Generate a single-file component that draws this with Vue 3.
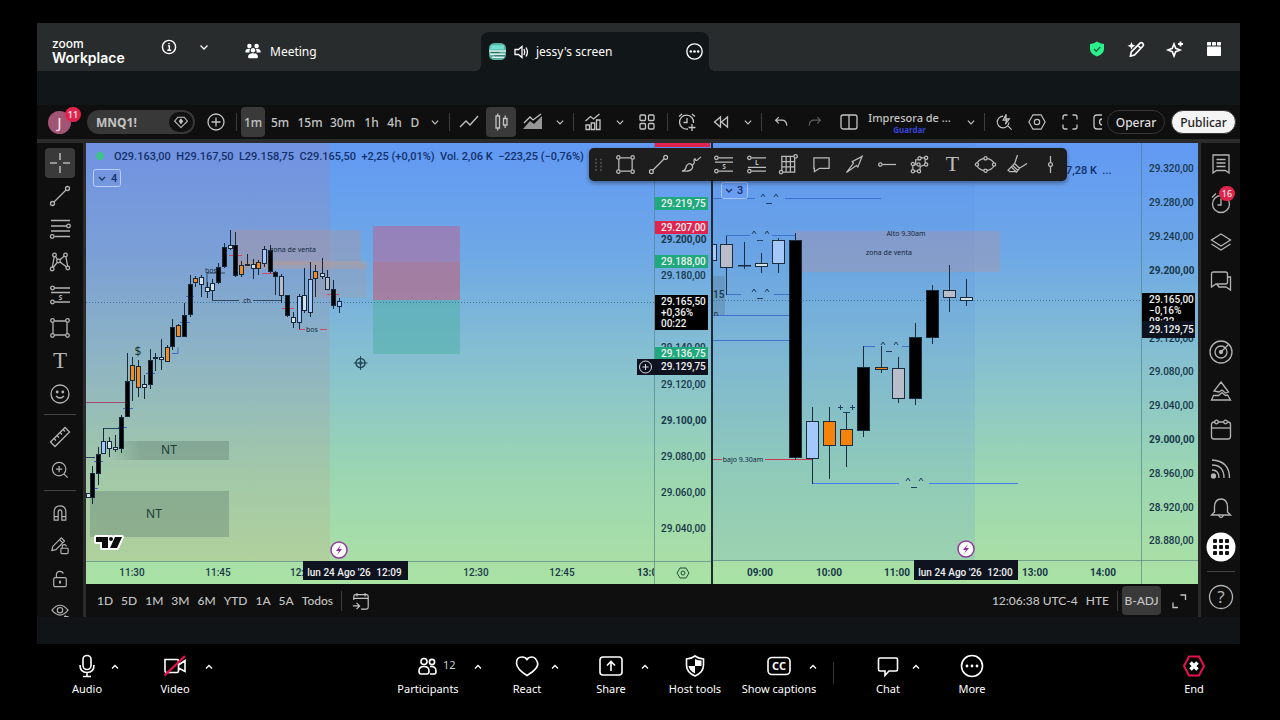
<script setup>
import { h } from 'vue'

const icons = {
  info: '<circle cx="10" cy="10" r="6"/><path d="M9 9h1.300v4M8.500 13h3.500M10 6.400v1"/>',
  chev: '<path d="M6.500 8.500 10 12l3.500-3.500"/>',
  chevUp: '<path d="M7 11.500 10 8.500l3 3"/>',
  people: '<g fill="currentColor" stroke="none"><circle cx="6" cy="4.500" r="2.500"/><circle cx="14" cy="4.500" r="2.500"/><path d="M1.500 11q0-3.500 4-3.500 1 0 1.500.5-1.500 1.500-.8 3.800H2.500q-1 0-1-.8zM18.500 11q0-3.500-4-3.500-1 0-1.500.5 1.500 1.500.8 3.800h3.700q1 0 1-.8z"/><circle cx="10" cy="9.200" r="2.500"/><path d="M4.500 16.500q0-4 5.500-4t5.500 4q0 1.500-1 1.500H5.500q-1 0-1-1.500z"/></g>',
  speaker: '<path d="M4 7.500h3.500L11 4.500v11l-3.500-3H4zM13 7q1.500 3 0 6M15 5.500q2.800 4.500 0 9" />',
  dots: '<circle cx="10" cy="10" r="7.300"/><g fill="currentColor" stroke="none"><circle cx="6.500" cy="10" r="1.200"/><circle cx="10" cy="10" r="1.200"/><circle cx="13.500" cy="10" r="1.200"/></g>',
  shield: '<path fill="#2bf08c" stroke="none" d="M10 2.500q3 2.300 7 2.500v5q0 5-7 7.500Q3 15 3 10V5q4-.2 7-2.500z"/><path stroke="#12643c" d="m7 10 2.200 2.200 4-4.200"/>',
  wand: '<path stroke-width="1.700" d="m4.500 17 .8-4.200 8.500-8.500q1.500-1.300 3 0 1.300 1.500 0 3L8.500 16zM12 6.500l2.500 2.500"/><path fill="currentColor" stroke="none" d="m5.500 3 1.200 2.700 2.800 1-2.800 1.200-1.200 2.800-1.200-2.800-2.800-1.200 2.800-1z"/>',
  spark: '<path stroke-width="1.600" d="m9 5 1.700 4.300L15 11l-4.300 1.700L9 17l-1.700-4.300L3 11l4.300-1.700z"/><path stroke-width="1.800" d="M15.500 2.500v5M13 5h5"/>',
  apps: '<g fill="currentColor" stroke="none"><rect x="3" y="3" width="4" height="3.500" rx=".5"/><rect x="8" y="3" width="4" height="3.500" rx=".5"/><rect x="13" y="3" width="4" height="3.500" rx=".5"/><rect x="3" y="7.500" width="14" height="9.500" rx=".8"/></g>',
  gem: '<path d="M6 4h8l4 5L10 17 2 9z"/><path fill="currentColor" d="m10 6.500 2 2.500-2 3-2-3z"/>',
  plus: '<circle cx="10" cy="10" r="8"/><path d="M10 5.500v9M5.500 10h9"/>',
  line: '<path d="m1 15 6-6 4 4 8-9"/>',
  candles: '<path d="M5 4h3.500v12H5zM6.700 1.500V4M6.700 16v2.500M12.500 6.500H16v6.500h-3.500zM14.200 3.500v3M14.200 13v3"/>',
  area: '<path d="m1 11 6-6 3 3 8-6"/><path fill="currentColor" stroke="none" opacity=".75" d="m0 17 7-8 4 3 8-8v13z"/>',
  indic: '<path d="M3 17.500V13h3.500v4.500zM8.200 17.500V11h3.500v6.500zM13.500 17.500V8H17v9.500zM2.500 9l5-4.500 3 2.500 6-5"/>',
  grid4: '<rect x="3" y="3" width="5.500" height="5.500" rx="1"/><rect x="11.500" y="3" width="5.500" height="5.500" rx="1"/><rect x="3" y="11.500" width="5.500" height="5.500" rx="1"/><rect x="11.500" y="11.500" width="5.500" height="5.500" rx="1"/>',
  alarm: '<path d="M11 17A7 7 0 1 1 16.500 11M10 6v4.500H6.500M2 4.500 5 2M18 4.500 15 2M15 12v7M11.500 15.500h7"/>',
  rewind: '<path d="M9.500 5v10L3.500 10zM16.500 5v10l-6-5z"/>',
  undo: '<path d="M7.500 4.500 4 8l3.500 3.500M4 8h7q5 0 5.500 6"/>',
  redo: '<path d="M12.500 4.500 16 8l-3.500 3.500M16 8H9q-5 0-5.500 6"/>',
  layout: '<rect x="2" y="3" width="16" height="14" rx="2"/><path d="M10 3v14"/>',
  search: '<path d="M9 3.500a6.500 6.500 0 1 0 6.500 7M14 14l4.500 4.500M12.500 1.500 9 8h4l-1.500 4.500L16 6.500h-4z"/>',
  hex: '<path d="M5.500 2h9L19 10l-4.500 8h-9L1 10z"/><circle cx="10" cy="10" r="3"/>',
  full: '<path d="M3 7.500V5q0-2 2-2h2.500M12.500 3H15q2 0 2 2v2.500M17 12.500V15q0 2-2 2h-2.500M7.500 17H5q-2 0-2-2v-2.500"/>',
  wallet: '<path d="M15 3H7Q4 3 4 6v8q0 3 3 3h8M14 7h-1.500q-3 0-3 3t3 3H14"/>',
  cross: '<path stroke-width="1.600" d="M10 0v7M10 13v7M0 10h7M13 10h7"/>',
  trend: '<circle cx="2.500" cy="17.500" r="2"/><circle cx="17.500" cy="2.500" r="2"/><path d="M4 16 16 4"/>',
  fib: '<path d="M1 1.500h19M1 7h16M1 12h19M4.500 17.500H20"/><circle cx="18.500" cy="7" r="1.800"/><circle cx="2.200" cy="17.500" r="1.800"/>',
  xabcd: '<path d="M2 17 4.500 3l4 6 7-6L18 16l-9.500-7z"/><g fill="#0f0f0f"><circle cx="4.500" cy="3" r="1.800"/><circle cx="15.500" cy="3" r="1.800"/><circle cx="8.500" cy="9" r="1.800"/><circle cx="2.200" cy="17" r="1.800"/><circle cx="17.800" cy="16" r="1.800"/></g>',
  fibS: '<circle cx="2.500" cy="3" r="1.800"/><path d="M4.500 3H20M1 7.500h19M4.500 17H20"/><circle cx="2.500" cy="17" r="1.800"/><text x="10.500" y="14.500" text-anchor="middle" font-size="7" font-weight="bold" fill="currentColor" stroke="none">S</text>',
  fibL: '<circle cx="2.500" cy="3" r="1.800"/><path d="M4.500 3H20M1 13h19M4.500 17H20"/><circle cx="2.500" cy="17" r="1.800"/><text x="10.500" y="11" text-anchor="middle" font-size="7" font-weight="bold" fill="currentColor" stroke="none">L</text>',
  rect: '<path d="M4.500 3h11M4.500 17h11M3 4.500v11M17 4.500v11"/><circle cx="2.500" cy="2.500" r="1.800"/><circle cx="17.500" cy="2.500" r="1.800"/><circle cx="2.500" cy="17.500" r="1.800"/><circle cx="17.500" cy="17.500" r="1.800"/>',
  text: '<text x="10" y="17" text-anchor="middle" font-size="23" font-family="Liberation Serif, serif" fill="currentColor" stroke="none">T</text>',
  smile: '<circle cx="10" cy="10" r="9"/><path d="M6 12q4 4 8 0"/><circle cx="7.200" cy="8" r=".8" fill="currentColor"/><circle cx="12.800" cy="8" r=".8" fill="currentColor"/>',
  ruler: '<path d="M.5 15 15 .5 19.500 5 5 19.500zM4 11.500l2 2M7 8.500l2 2M10 5.500l2 2M13 2.500l2 2"/>',
  zoomIn: '<circle cx="9" cy="9" r="7.500"/><path d="m14.500 14.500 4 4M9 5.500v7M5.500 9h7"/>',
  magnet: '<path d="M3.500 18V9q0-7 6.500-7t6.500 7v9h-4.500V9q0-2.500-2-2.500T8 9v9zM3.500 14H8M12 14h4.500"/>',
  penLock: '<path d="m1 15 1-4.500L11.500 1l3.500 3.500-9.500 9.500zM9.500 3l3.500 3.500"/><rect x="11" y="12.500" width="8" height="6" rx="1"/><path d="M12.500 12.500v-2q0-2 2.200-2t2.300 2"/>',
  lock: '<rect x="3" y="8.500" width="14" height="10" rx="1.500"/><path d="M6 8.500V5q0-3.500 4-3.500 3 0 3.500 2.500"/><path d="M10 12v3" stroke-width="2.200"/>',
  eye: '<path d="M1 8q9-11 18 0-9 11-18 0z"/><circle cx="10" cy="8" r="3"/><path d="M16 13.500v3M14.500 15h5"/>',
  brush: '<path d="M1 17q4-1 4.500-5Q8 7.500 11 10q2.500 2.500 0 5-2 2.500-10 2zM11 10q2 1 3-2-1-4 1-4 0 3 2.500 1L21 2"/>',
  gann: '<path d="M3 1.500h13.500V18H3zM3 7h14M3 12.500h14M7.500 1.500V18M12 1.500V18"/><g fill="#1d1d1d"><circle cx="17.500" cy="1.500" r="1.800"/><circle cx="2.200" cy="18" r="1.800"/></g>',
  bubble: '<path d="M2 3h16v11H8l-5.500 3.500V14H2z"/>',
  arrow: '<path d="m1.500 18.500 7.500-10-1.500-1.500L18 1.500 13.500 12.500 12 11z"/>',
  hray: '<circle cx="2.500" cy="10" r="1.800"/><path d="M4.500 10H19"/>',
  elliott: '<path d="M3 17V11l3-1 0-5h4M3 17h7l1-5 5-2V3h-5"/><g fill="#1d1d1d"><circle cx="3" cy="17" r="1.700"/><circle cx="9.500" cy="17" r="1.700"/><circle cx="3" cy="9.500" r="1.700"/><circle cx="9" cy="10" r="1.700"/><circle cx="10" cy="3.500" r="1.700"/><circle cx="17" cy="3" r="1.700"/><circle cx="17" cy="10" r="1.700"/></g>',
  ellipse: '<ellipse cx="10" cy="10" rx="9" ry="6.500"/><g fill="#1d1d1d"><circle cx="10" cy="3.500" r="1.700"/><circle cx="10" cy="16.500" r="1.700"/><circle cx="1" cy="10" r="1.700"/><circle cx="19" cy="10" r="1.700"/></g>',
  marker: '<path d="M10 0 7 9l5 5 8-5M7 9l-3.500 3.500L9 18l3-4M3.500 12.500 0 16l2 1.500h7M5 11l5.500 5.500"/>',
  vline: '<circle cx="10" cy="10" r="2"/><path d="M10 1v7M10 12v7"/>',
  list: '<path d="M2 1h16v18l-3.500-2.500h-9L2 19zM5.500 5.500h9M5.500 9h9M5.500 12.500h9"/>',
  clock: '<circle cx="10" cy="11" r="8.500"/><path d="M10 5.500V12H6.500M1 4.500 5 .5"/>',
  layers: '<path d="m10 2 9.500 6L10 14 .5 8zM.5 12 10 18l9.500-6"/>',
  chat2: '<path d="M2.500 1h12q2 0 2 2v8q0 2-2 2H5l-4.500 3V3q0-2 2-2zM16.500 6h3v13L15 16H8l-2-2.500"/>',
  radar: '<circle cx="10" cy="10" r="11"/><circle cx="10" cy="10" r="6"/><path d="m10 10 7.500-7.500"/><circle cx="10" cy="10" r="1.500" fill="currentColor"/>',
  pyramid: '<path d="m10 1 7.500 10-3 1-3.500-3-3 2-5-1zM2.500 14.500.5 19h19l-3-5-2 .5-3.500-3-3.500 3z"/>',
  cal: '<rect x=".5" y="2" width="19" height="17" rx="2.500"/><path d="M.5 8h19"/><circle cx="5.500" cy="2" r="1.800" fill="#0f0f0f"/><circle cx="14.500" cy="2" r="1.800" fill="#0f0f0f"/>',
  feed: '<circle cx="2.500" cy="17" r="2" fill="currentColor"/><path d="M1 11q7 0 7 8M1 6q12 0 12 13M1 1q17.500 1 17.500 18"/>',
  bell: '<path d="M3.500 14V8.500Q4 1 10 1t6.500 7.500V14l3 3h-19zM7.500 17.500q2.500 4 5 0"/>',
  help: '<circle cx="10" cy="10" r="11.500"/><text x="10" y="16" text-anchor="middle" font-size="17" fill="currentColor" stroke="none">?</text>',
  goto: '<path d="M2 9V5q0-2 2-2h12q2 0 2 2v12q0 2-2 2h-6M2 7h16M5.500 1v4M14.500 1v4M1 15.500h7M5 12l3.500 3.500L5 19"/>',
  expand: '<path d="M4 11.500v5h5M11.500 4h5v5"/>',
  mic: '<rect x="8" y="1.500" width="8" height="14" rx="4"/><path d="M5 11q0 7.500 7 7.500t7-7.500M12 18.500V22M8 22.500h8"/>',
  video: '<path d="M2 5.500h12q1.500 0 1.500 1.500v10q0 1.500-1.500 1.500H3.500Q2 18.500 2 17zM15.500 11 22 6.500v11L15.500 14"/><path stroke="#e8114f" stroke-width="2.400" d="M1.500 21.500 22 2"/>',
  persons: '<circle cx="8" cy="7.500" r="3"/><circle cx="16" cy="8" r="2.600"/><path d="M3 17q0-4.500 5-4.500t5 4.500q0 3-2 3H5q-2 0-2-3zM14 12.500q6-.5 6 4.500 0 3-1.500 3H14"/>',
  heart: '<path d="M12 21.500Q1.500 15 1.500 9T7 3q3.500 0 5 2.500Q13.500 3 17 3t5.500 5.500T12 21.500z"/>',
  share: '<rect x="1" y="3" width="22" height="18" rx="3"/><path d="M12 17V8M8 11.500l4-4 4 4"/>',
  host: '<path d="M12 2q4 3 8.500 3v6q0 7.500-8.500 11-8.500-3.500-8.500-11V5Q8 5 12 2z"/><path fill="currentColor" stroke="none" d="M12 5v7h6.500q0-2 0-5.500Q15 6.500 12 5zM12 12v7.500Q6.500 17 5.500 12z"/>',
  cc: '<rect x="1" y="3.500" width="22" height="17" rx="4"/><text x="12" y="16" text-anchor="middle" font-size="11" font-weight="bold" fill="currentColor" stroke="none">CC</text>',
  chat: '<path d="M4 4h16q1.500 0 1.500 1.500v10q0 1.500-1.500 1.500h-7l-4 4.500V17H4q-1.500 0-1.500-1.500v-10Q2.500 4 4 4z"/>',
  more: '<circle cx="12" cy="12" r="10.500"/><g fill="currentColor" stroke="none"><circle cx="7" cy="12" r="1.400"/><circle cx="12" cy="12" r="1.400"/><circle cx="17" cy="12" r="1.400"/></g>',
  end: '<path stroke="#e8114f" stroke-width="2" d="M7 2.500h10l5 9.500-5 9.500H7L2 12z"/><path stroke-width="3.600" d="m8.500 8.500 7 7M15.500 8.500l-7 7"/>',
}

const Icon = (props) =>
  h('svg', {
    class: 'icon',
    viewBox: `0 0 ${props.box || 20} ${props.box || 20}`,
    width: props.size || 20,
    height: props.size || 20,
    fill: 'none',
    stroke: 'currentColor',
    'stroke-width': props.box ? 1.6 : 1.3,
    'font-family': 'Noto Sans, sans-serif',
    overflow: 'visible',
    'aria-hidden': 'true',
    innerHTML: icons[props.name],
  })
Icon.props = ['name', 'size', 'box']

const frames = ['1m', '5m', '15m', '30m', '1h', '4h', 'D']
const ranges = ['1D', '5D', '1M', '3M', '6M', 'YTD', '1A', '5A', 'Todos']
const drawTop = ['trend', 'fib', 'xabcd', 'fibS', 'rect', 'text', 'smile']
const drawEnd = ['magnet', 'penLock', 'lock', 'eye']
const floating = ['rect', 'trend', 'brush', 'fibS', 'fibL', 'gann', 'bubble', 'arrow', 'hray', 'elliott', 'text', 'ellipse', 'marker', 'vline']
const sideEnd = ['radar', 'pyramid', 'cal', 'feed', 'bell']

// x, high, body top, body bottom, low, kind
const K = '#000', O = '#f58a1f', W = '#d3e2ea', B = '#a4c8fa', G = '#b9bcc9'
const leftCandles = [
  [88, 493, 493, 498, 498, W], [92, 466, 473, 498, 504, K], [98, 447, 454, 474, 485, K], [103, 428, 441, 454, 454, B],
  [109, 437, 441, 449, 457, W], [115, 435, 447, 450, 452, W], [121, 415, 417, 449, 453, K], [127, 353, 381, 417, 417, K],
  [132, 357, 365, 381, 401, O], [138, 360, 366, 388, 397, O], [144, 375, 384, 388, 399, W], [150, 349, 360, 385, 389, K],
  [155, 353, 357, 359, 371, O], [161, 339, 357, 360, 370, W], [167, 345, 347, 362, 362, O], [172, 319, 327, 347, 350, K],
  [178, 324, 325, 337, 337, O], [184, 303, 315, 337, 337, K], [190, 275, 284, 315, 317, K], [195, 276, 278, 283, 287, O],
  [201, 275, 277, 285, 297, W], [207, 282, 287, 292, 298, W], [212, 279, 283, 291, 300, W], [218, 263, 267, 283, 284, K],
  [224, 243, 247, 267, 268, K], [230, 230, 245, 249, 250, W], [235, 232, 245, 276, 277, K], [241, 261, 265, 275, 277, O],
  [247, 254, 264, 265, 266, W], [253, 259, 264, 269, 279, W], [258, 260, 262, 269, 275, O], [264, 246, 249, 264, 267, B],
  [270, 245, 250, 272, 273, K], [275, 271, 272, 277, 295, K], [281, 274, 276, 296, 303, G], [287, 295, 295, 316, 317, K],
  [293, 312, 317, 323, 328, W], [299, 294, 296, 323, 329, B], [304, 268, 295, 311, 313, W], [310, 262, 279, 313, 317, B],
  [315, 265, 271, 279, 297, O], [322, 258, 273, 277, 279, W], [327, 270, 277, 290, 290, G], [333, 280, 289, 306, 309, K],
  [339, 298, 301, 307, 313, B],
]
const rightCandles = [
  [710, 244, 244, 260, 260, B], [726, 236, 244, 267, 295, G], [744, 242, 265, 265, 269, W], [761, 253, 263, 266, 273, W],
  [778, 238, 240, 263, 273, B], [795, 233, 240, 457, 460, K], [812, 407, 421, 458, 484, B], [829, 407, 421, 445, 479, O],
  [846, 412, 429, 445, 467, O], [863, 346, 367, 430, 437, K], [881, 346, 367, 369, 373, O], [898, 357, 368, 398, 403, G],
  [915, 323, 337, 398, 405, K], [932, 285, 290, 337, 344, K], [949, 265, 290, 297, 312, G], [966, 279, 297, 300, 306, W],
]
const leftPrices = [
  ['29.200,00', 239, true], ['29.180,00', 275], ['29.140,00', 347], ['29.120,00', 384], ['29.100,00', 420, true],
  ['29.080,00', 456], ['29.060,00', 492], ['29.040,00', 528],
]
const rightPrices = [
  ['29.320,00', 168], ['29.280,00', 202], ['29.240,00', 236], ['29.200,00', 270, true], ['29.120,00', 338], ['29.080,00', 371],
  ['29.040,00', 405], ['29.000,00', 439, true], ['28.960,00', 473], ['28.920,00', 507], ['28.880,00', 540],
]
const leftTags = [['29.219,75', 203, '#1fa97c'], ['29.207,00', 227, '#e02450'], ['29.188,00', 261, '#1fa97c'], ['29.136,75', 353, '#1fa97c']]
const leftTimes = [['11:30', 132], ['11:45', 218], ['12:', 297], ['12:30', 476], ['12:45', 562]]
const rightTimes = [['09:00', 760], ['10:00', 829], ['11:00', 897], ['13:00', 1035], ['14:00', 1103]]
const faces = [[769, 200], [760, 237], [760, 295], [889, 348], [914, 484]]

const calls = [
  { label: 'Participants', icon: 'persons', count: '12', arrow: 'wide', wide: true },
  { label: 'React', icon: 'heart', arrow: 'near' },
  { label: 'Share', icon: 'share', arrow: 'far' },
  { label: 'Host tools', icon: 'host' },
  { label: 'Show captions', icon: 'cc', arrow: 'far' },
]
</script>

<template>
  <div class="screen">
    <header class="head">
      <div class="brand"><span>zoom</span><b>Workplace</b></div>
      <button class="hb info" aria-label="Meeting information"><Icon name="info" size="22" /></button>
      <button class="hb" aria-label="Expand"><Icon name="chev" /></button>
      <button class="tab"><Icon name="people" size="18" />Meeting</button>
      <div class="tab active">
        <svg class="pic" viewBox="0 0 16 16" aria-hidden="true"><rect width="16" height="16" rx="5" fill="#58b3a5" /><path d="M2 2h12v4H1z" fill="#6fe0d0" /><path d="M0 7.500h16M1 10.500h14M3 13.500h11" stroke="#dcece6" stroke-width="1.400" /><path d="M2 9h8M5 12h10" stroke="#2f6b60" /></svg>
        <Icon name="speaker" /><span>jessy's screen</span>
        <button class="hb more" aria-label="Screen options"><Icon name="dots" size="21" /></button>
      </div>
      <div class="headright">
        <button class="hb" aria-label="Security"><Icon name="shield" /></button>
        <button class="hb" aria-label="Annotate"><Icon name="wand" /></button>
        <button class="hb" aria-label="AI companion"><Icon name="spark" /></button>
        <button class="hb" aria-label="Apps"><Icon name="apps" /></button>
      </div>
    </header>

    <main class="trade">
      <nav class="bar">
        <button class="user" aria-label="Account"><span class="face">J</span><span class="badge">11</span></button>
        <button class="symbol"><b>MNQ1!</b><span class="gem"><Icon name="gem" size="16" /></span></button>
        <button class="tb addsym" aria-label="Compare"><Icon name="plus" /></button>
        <div class="group frames">
          <button v-for="(f, i) in frames" :key="f" :class="{ on: i === 0 }">{{ f }}</button>
          <button class="ch" aria-label="Intervals"><Icon name="chev" size="18" /></button>
        </div>
        <div class="group">
          <button class="tb" aria-label="Line"><Icon name="line" /></button>
          <button class="tb on" aria-label="Candles"><Icon name="candles" /></button>
          <button class="tb" aria-label="Area"><Icon name="area" /></button>
          <button class="ch" aria-label="Chart types"><Icon name="chev" size="18" /></button>
        </div>
        <div class="group">
          <button class="tb" aria-label="Indicators"><Icon name="indic" /></button>
          <button class="ch" aria-label="Favourites"><Icon name="chev" size="18" /></button>
          <button class="tb" aria-label="Templates"><Icon name="grid4" /></button>
        </div>
        <div class="group">
          <button class="tb" aria-label="Alert"><Icon name="alarm" /></button>
          <button class="tb" aria-label="Replay"><Icon name="rewind" /></button>
          <button class="ch" aria-label="Replay options"><Icon name="chev" size="18" /></button>
        </div>
        <div class="group saved">
          <button class="tb" aria-label="Undo"><Icon name="undo" size="18" /></button>
          <button class="tb dim" aria-label="Redo"><Icon name="redo" size="18" /></button>
          <button class="tb" aria-label="Layout"><Icon name="layout" /></button>
          <button class="name"><span>Impresora de ...</span><small>Guardar</small></button>
          <button class="ch" aria-label="Layouts"><Icon name="chev" size="18" /></button>
        </div>
        <div class="group last">
          <button class="tb" aria-label="Search"><Icon name="search" size="18" /></button>
          <button class="tb" aria-label="Settings"><Icon name="hex" size="18" /></button>
          <button class="tb" aria-label="Full screen"><Icon name="full" /></button>
          <button class="tb cut" aria-label="Wallet"><Icon name="wallet" /></button>
        </div>
        <button class="pill">Operar</button>
        <button class="pill light">Publicar</button>
      </nav>

      <div class="body">
        <nav class="draw">
          <button class="on" aria-label="Crosshair"><Icon name="cross" /></button>
          <button v-for="n in drawTop" :key="n" :aria-label="n"><Icon :name="n" /></button>
          <hr />
          <button aria-label="Measure"><Icon name="ruler" /></button>
          <button aria-label="Zoom in"><Icon name="zoomIn" size="18" /></button>
          <hr />
          <button v-for="n in drawEnd" :key="n" :aria-label="n"><Icon :name="n" size="18" /></button>
        </nav>

        <div class="center">
          <div class="charts">
            <svg class="chart one" viewBox="86 143 625 441" preserveAspectRatio="xMinYMin slice" role="img" aria-label="MNQ1! 1 minute">
              <defs>
                <linearGradient id="sky" x1="0" y1="0" x2="0" y2="1">
                  <stop offset="0" stop-color="#6199f4" /><stop offset=".25" stop-color="#6ea8e6" /><stop offset=".5" stop-color="#87c1cf" /><stop offset=".75" stop-color="#9bd6b2" /><stop offset=".95" stop-color="#a9dfa6" /><stop offset="1" stop-color="#a9e3a4" />
                </linearGradient>
                <linearGradient id="warm" x1="0" y1="0" x2="0" y2="1"><stop offset="0" stop-color="#b8708f" /><stop offset=".5" stop-color="#b0808c" /><stop offset="1" stop-color="#d09070" /></linearGradient>
                <linearGradient id="fade"><stop offset="0" stop-color="#5f7f71" stop-opacity="0" /><stop offset=".25" stop-color="#5f7f71" stop-opacity=".4" /></linearGradient>
                <clipPath id="plotA"><rect x="86" y="143" width="568" height="441" /></clipPath>
              </defs>
              <rect x="86" y="143" width="625" height="441" fill="url(#sky)" />
              <rect x="86" y="143" width="244" height="418" fill="url(#warm)" opacity=".18" />
              <rect x="233" y="230" width="128" height="35" fill="#c28f86" opacity=".3" />
              <rect x="233" y="261" width="134" height="8" fill="#d49a76" opacity=".3" />
              <rect x="310" y="265" width="57" height="33" fill="#c28f86" opacity=".22" />
              <rect x="110" y="441" width="119" height="19" fill="url(#fade)" />
              <rect x="90" y="491" width="139" height="46" fill="#5f7f71" opacity=".38" />
              <rect x="373" y="226" width="87" height="74" fill="#b06a9c" opacity=".6" />
              <rect x="373" y="262" width="87" height="38" fill="#c06a70" opacity=".28" />
              <rect x="373" y="300" width="87" height="54" fill="#55b2ac" opacity=".62" />
              <path d="M86 302.500H655" stroke="#41739a" stroke-dasharray="1 2" />
              <path d="M86 402.500h40" stroke="#a8466c" /><path d="M86 457.500h9M103 428.500h18" stroke="#28465e" />
              <path fill="none" stroke="#3d6ad0" d="M123 408.500h10M118 427.500h9M90 488.500h8M146 373.500h9M180 322.500h10M186 296.500h8M94 461.500h9M172 353.500h6v-6" />
              <path d="M212 300.500h27M253 300.500h28M207 289v-16h18" fill="none" stroke="#2c4a66" />
              <path stroke="#d0485c" d="M229 255.500h13M262 273.500h13M327 294.500h12M282 308.500h12M299 329.500h6M320 329.500h7" />
              <g v-for="c in leftCandles" :key="c[0]" stroke="#16283a">
                <path :d="`M${c[0] + .5} ${c[1]}V${c[4]}`" />
                <rect :x="c[0] - 1.500" :y="c[2] + .5" width="4" :height="Math.max(c[3] - c[2] - 1, 1)" :fill="c[5]" />
              </g>
              <g class="note"><text x="293" y="252">zona de venta</text><text x="211" y="273">bos</text><text x="247" y="303">ch</text><text x="312" y="332">bos</text></g>
              <text class="nt" x="138" y="356">$</text><text class="nt" x="169" y="454">NT</text><text class="nt" x="154" y="518">NT</text>
              <path d="M96 537h12v11h-6v-6h-6zM115 537h7l-5 11h-7zM111 537a2 2 0 1 1 0 4 2 2 0 0 1 0-4z" fill="#0d0d0d" stroke="#fff" stroke-width="4" paint-order="stroke" stroke-linejoin="round" />
              <g stroke="#23485a" fill="none"><circle cx="360.500" cy="363" r="4.500" stroke-width="1.600" /><path d="M360.500 356v14M353.500 363h14" /><circle cx="360.500" cy="363" r="1.500" /></g>
              <circle cx="100" cy="156" r="4" fill="#3fc18d" />
              <text class="ohlc" x="114" y="160">O29.163,00&nbsp; H29.167,50&nbsp; L29.158,75&nbsp; C29.165,50&nbsp; +2,25 (+0,01%)&nbsp; Vol. 2,06 K&nbsp; −223,25 (−0,76%)</text>
              <rect x="93.500" y="169.500" width="27" height="17" rx="2" fill="none" stroke="#b6d0fa" />
              <path d="m99 177 3 3 3-3" fill="none" stroke="#17345e" stroke-width="1.300" /><text class="ohlc" x="111" y="182">4</text>
              <path d="M654.500 143V584M86 561.500H711" stroke="#4b7c80" stroke-opacity=".6" />
              <g class="axis">
                <text v-for="p in leftPrices" :key="p[0]" x="661" :y="p[1] + 4" :class="{ strong: p[2] }">{{ p[0] }}</text>
                <g v-for="t in leftTags" :key="t[0]"><rect x="655" :y="t[1] - 6" width="53" height="13" :fill="t[2]" /><text class="on" x="661" :y="t[1] + 4">{{ t[0] }}</text></g>
                <rect x="655" y="143" width="55" height="4" fill="#e02450" />
                <rect x="655" y="295" width="53" height="35" fill="#000" />
                <text class="on" x="661" y="305">29.165,50</text><text class="on" x="661" y="316">+0,36%</text><text class="on" x="661" y="327">00:22</text>
                <rect x="637" y="359" width="71" height="16" fill="#0f1320" /><text class="on" x="661" y="370">29.129,75</text>
                <g stroke="#d8dce4" fill="none"><circle cx="645.500" cy="367" r="6" /><path d="M645.500 364v6M642.500 367h6" /></g>
              </g>
              <g class="axis mid" clip-path="url(#plotA)"><text v-for="t in leftTimes" :key="t[0]" :x="t[1]" y="576">{{ t[0] }}</text><text class="strong" x="650" y="576">13:00</text></g>
              <rect x="303" y="561" width="105" height="19" fill="#0f1320" />
              <g class="axis mid"><text class="on" x="339" y="576">lun 24 Ago '26</text><text class="on" x="389" y="576">12:09</text></g>
              <path d="M680 568h6l3 5-3 5h-6l-3-5z" fill="none" stroke="#244c3c" /><circle cx="683" cy="573" r="2" fill="none" stroke="#244c3c" />
              <g><circle cx="339" cy="550" r="8" fill="#fff" stroke="#8e3a9d" stroke-width="1.500" /><path d="m341 545-5 6h3l-2 4 5-6h-3z" fill="#8e2aa5" /></g>
            </svg>

            <svg class="chart two" viewBox="713 143 485 441" preserveAspectRatio="xMinYMin slice" role="img" aria-label="MNQ1! 15 minutes">
              <rect x="713" y="143" width="485" height="441" fill="url(#sky)" />
              <rect x="713" y="143" width="262" height="418" fill="#5a90e0" opacity=".16" />
              <rect x="795" y="231" width="205" height="41" fill="#b88f98" opacity=".34" />
              <rect x="713" y="276" width="12" height="40" fill="#5a7f9c" opacity=".4" />
              <path d="M713 300.500H1141" stroke="#41739a" stroke-dasharray="1 2" />
              <path stroke="#3f72cc" fill="none" d="M713 198.500h42M785 198.500h96M726 235.500h24M772 235.500h24M726 294.500h15M774 294.500h21M713 315.500h82M713 340.500h82M863 346.500h12M902 346.500h13" />
              <path d="M812 483.500h87M929 483.500h89" stroke="#3f80ea" />
              <path d="M713 459.500h9M765 459.500h47" stroke="#d03850" />
              <g v-for="c in rightCandles" :key="c[0]" stroke="#1b2c3e">
                <path :d="`M${c[0] + .5} ${c[1]}V${c[4]}`" />
                <rect :x="c[0] - 5.500" :y="c[2] + .5" width="12" :height="Math.max(c[3] - c[2], 0.500)" :fill="c[5] === O ? '#f5820a' : c[5]" />
              </g>
              <g v-for="(f, i) in faces" :key="i" stroke="#1c3f63" fill="none"><path :d="`M${f[0] - 8} ${f[1] - 3}l2-3 2 3M${f[0] + 5} ${f[1] - 3}l2-3 2 3M${f[0] - 3} ${f[1] + 3.500}h6`" /></g>
              <path d="M838 407.500h5M840.500 405v5M850 407.500h5M852.500 405v5M843 412.500h7" stroke="#1c3f63" />
              <g class="note"><text x="906" y="236">Alto 9.30am</text><text x="889" y="255">zona de venta</text><text x="743" y="462">bajo 9.30am</text></g>
              <text class="axis" x="713" y="298">15</text><text class="note" x="716" y="316">n</text>
              <rect x="721.500" y="182.500" width="26" height="16" rx="2" fill="#6a9cf2" stroke="#a6c6fa" />
              <path d="m726 189 3 3 3-3" fill="none" stroke="#17345e" stroke-width="1.300" /><text class="ohlc" x="737" y="194">3</text>
              <text class="ohlc" x="1066" y="174">7,28 K&nbsp; ...</text>
              <path d="M1141.500 143V584M713 560.500H1198" stroke="#4b7c80" stroke-opacity=".6" />
              <g class="axis">
                <text v-for="p in rightPrices" :key="p[0]" x="1149" :y="p[1] + 4" :class="{ strong: p[2] }">{{ p[0] }}</text>
                <rect x="1142" y="293" width="53" height="29" fill="#000" />
                <text class="on" x="1149" y="303">29.165,00</text><text class="on" x="1149" y="314">−0,16%</text><text class="on" x="1149" y="325">08:22</text>
                <rect x="1142" y="321" width="53" height="17" fill="#0f1320" /><text class="on" x="1149" y="333">29.129,75</text>
              </g>
              <g class="axis mid"><text v-for="t in rightTimes" :key="t[0]" class="strong" :x="t[1]" y="576">{{ t[0] }}</text></g>
              <rect x="914" y="560" width="104" height="20" fill="#0f1320" />
              <g class="axis mid"><text class="on" x="950" y="576">lun 24 Ago '26</text><text class="on" x="1000" y="576">12:00</text></g>
              <g><circle cx="966" cy="549" r="8" fill="#fff" stroke="#8e3a9d" stroke-width="1.500" /><path d="m968 544-5 6h3l-2 4 5-6h-3z" fill="#8e2aa5" /></g>
            </svg>

            <div class="float">
              <svg class="grip" viewBox="0 0 8 14" width="8" height="14" fill="#555"><circle v-for="n in 8" :key="n" :cx="n % 2 ? 1 : 6" :cy="Math.ceil(n / 2) * 3.500 - 2" r="1" /></svg>
              <button v-for="(n, i) in floating" :key="i" :aria-label="n"><Icon :name="n" size="19" /></button>
            </div>
          </div>
          <footer class="ranges">
            <button v-for="r in ranges" :key="r">{{ r }}</button>
            <i></i>
            <button class="goto" aria-label="Go to date"><Icon name="goto" size="18" /></button>
            <span class="clock">12:06:38 UTC-4</span><button class="hte">HTE</button>
            <i></i>
            <button class="adj">B-ADJ</button>
            <button class="exp" aria-label="Expand"><Icon name="expand" /></button>
          </footer>
        </div>

        <nav class="side">
          <button aria-label="Watchlist"><Icon name="list" /></button>
          <button class="alerts" aria-label="Alerts"><Icon name="clock" /><span class="badge">16</span></button>
          <button aria-label="Object tree"><Icon name="layers" /></button>
          <button aria-label="Chats"><Icon name="chat2" /></button>
          <div class="space"></div>
          <button v-for="n in sideEnd" :key="n" :aria-label="n"><Icon :name="n" /></button>
          <button class="dial" aria-label="Products"><svg viewBox="0 0 30 30" width="30" height="30"><circle cx="15" cy="15" r="14.500" fill="#fff" /><rect v-for="n in 9" :key="n" :x="7 + ((n - 1) % 3) * 6" :y="7 + Math.floor((n - 1) / 3) * 6" width="4" height="4" rx="1" fill="#111" /></svg></button>
          <hr />
          <button aria-label="Help"><Icon name="help" /></button>
        </nav>
      </div>
    </main>

    <footer class="zoombar">
      <div class="zl">
        <div class="call"><button><Icon name="mic" box="24" size="24" /><span>Audio</span></button><button class="up near" aria-label="Audio options"><Icon name="chevUp" /></button></div>
        <div class="call"><button><Icon name="video" box="24" size="24" /><span>Video</span></button><button class="up far" aria-label="Video options"><Icon name="chevUp" /></button></div>
      </div>
      <div class="zc">
        <div v-for="c in calls" :key="c.label" class="call" :class="{ wide: c.wide }">
          <button><Icon :name="c.icon" box="24" size="24" /><span>{{ c.label }}</span></button>
          <span v-if="c.count" class="count">{{ c.count }}</span>
          <button v-if="c.arrow" class="up" :class="c.arrow" :aria-label="c.label + ' options'"><Icon name="chevUp" /></button>
        </div>
        <i></i>
        <div class="call"><button><Icon name="chat" box="24" size="24" /><span>Chat</span></button><button class="up near" aria-label="Chat options"><Icon name="chevUp" /></button></div>
        <div class="call"><button><Icon name="more" box="24" size="24" /><span>More</span></button></div>
      </div>
      <div class="call"><button><Icon name="end" box="24" size="24" /><span>End</span></button></div>
    </footer>
  </div>
</template>

<style>
body { margin: 0; background: #000; }
</style>

<style scoped>
.screen { min-height: 100vh; box-sizing: border-box; padding: 23px 40px 0 37px; background: #000; color: #fff; font-family: "Noto Sans", "Open Sans", sans-serif; font-size: 12px; overflow: hidden; }
button { border: 0; padding: 0; margin: 0; background: none; color: inherit; font: inherit; display: flex; align-items: center; justify-content: center; flex-shrink: 0; white-space: nowrap; }
.head { height: 48px; background: #282c2d; display: flex; align-items: center; padding-left: 15px; }
.brand { width: 105px; display: flex; flex-direction: column; font-family: Inter, sans-serif; font-size: 12px; line-height: 12px; font-weight: 500; padding-top: 8px; }
.brand b { font-size: 14px; line-height: 15px; font-weight: 600; }
.hb { width: 24px; height: 24px; }
.head > .hb { margin-right: 11px; }
.tab { display: flex; align-items: center; gap: 8px; margin-left: 17px; padding-top: 8px; width: 237px; justify-content: flex-start; }
.tab.active { position: relative; align-self: flex-end; box-sizing: border-box; height: 39px; width: 228px; margin-left: 0; padding: 0 3px 0 8px; background: #111619; border-radius: 8px 8px 0 0; gap: 5px; }
.tab.active::before, .tab.active::after { content: ""; position: absolute; bottom: 0; width: 6px; height: 6px; }
.tab.active::before { right: 100%; background: radial-gradient(circle at 0 0, transparent 6px, #111619 6px); }
.tab.active::after { left: 100%; background: radial-gradient(circle at 100% 0, transparent 6px, #111619 6px); }
.pic { width: 17px; height: 17px; }
.more { margin-left: auto; }
.headright { margin-left: auto; display: flex; gap: 15px; padding: 4px 14px 0 0; }

.trade { background: #0f0f0f; border-top: 34px solid #111619; border-bottom: 27px solid #111417; }
.bar { height: 34px; display: flex; align-items: center; color: #c4c4c4; border-bottom: 4px solid #2b2b2b; font-size: 12px; padding-right: 4px; font-weight: 500; }
.user { position: relative; width: 50px; height: 34px; }
.face { width: 23px; height: 23px; margin-right: 5px; border-radius: 50%; background: #a25474; color: #f3dbe4; font-size: 15px; line-height: 23px; }
.badge { position: absolute; background: #e0244c; color: #fff; border-radius: 8px; font-size: 9px; line-height: 15px; width: 16px; text-align: center; }
.user .badge { left: 28px; top: 2px; }
.symbol { width: 108px; height: 24px; border-radius: 12px; background: #383838; justify-content: space-between; padding: 0 2px 0 9px; }
.gem { display: flex; background: #111; border-radius: 10px; height: 20px; width: 24px; align-items: center; justify-content: center; }
.tb { width: 34px; height: 30px; }
.addsym { width: 41px; }
.ch { width: 20px; height: 30px; }
.group { display: flex; align-items: center; position: relative; padding: 0 3px; }
.group::before { content: ""; position: absolute; left: 0; height: 18px; width: 1px; background: #3c3c3c; }
.frames { padding-left: 5px; }
.frames button { width: 30px; height: 30px; }
.frames button:nth-child(1) { width: 24px; }
.frames button:nth-child(4) { width: 35px; }
.frames button:nth-child(5), .frames button:nth-child(6) { width: 23px; }
.frames button:nth-child(7) { width: 18px; }
.frames .ch { width: 22px; }
.on { background: #3a3a3a; border-radius: 4px; }
.tb.on { width: 30px; }
.dim { color: #5e5e5e; }
.name { flex-direction: column; line-height: 14px; font-size: 11px; width: 87px; margin-right: 8px; }
.name small { font-size: 8px; line-height: 9px; color: #3644d8; font-weight: bold; }
.last { flex: 1; }
.last .tb { width: 33px; }
.last .cut { width: 12px; overflow: hidden; justify-content: flex-start; margin-left: 4px; }
.pill { height: 24px; box-sizing: border-box; border: 1px solid #363636; border-radius: 12px; width: 58px; color: #dedede; }
.pill.light { background: #f4f4f4; color: #222; width: 65px; margin-left: 6px; }

.body { display: flex; height: 474px; color: #b4b4b4; }
.draw { width: 46px; border-right: 3px solid #2b2b2b; padding-top: 3px; box-sizing: content-box; overflow: hidden; display: flex; flex-direction: column; align-items: center; flex-shrink: 0; }
.draw button { width: 30px; height: 33px; }
.draw .on { height: 30px; margin: 2px 0 1px; }
hr { width: 32px; border: 0; border-top: 1px solid #444; margin: 4px 0 5px; flex-shrink: 0; }
.center { flex: 1; min-width: 0; display: flex; flex-direction: column; }
.charts { position: relative; display: flex; gap: 2px; height: 441px; background: #1d2a33; border-radius: 4px 4px 0 0; }
.chart { display: block; height: 441px; min-width: 0; }
.one { flex: 625; }
.two { flex: 485; }
.note text, .note { font-size: 7px; fill: #12283c; text-anchor: middle; }
.nt { font-size: 12px; fill: #1d3a35; text-anchor: middle; }
.ohlc { font-family: Roboto, sans-serif; font-size: 11px; font-weight: 500; fill: #12306a; }
.axis { font-family: Roboto, sans-serif; font-size: 10px; font-weight: 500; fill: #173749; }
.axis .strong { font-weight: 700; }
.axis .on { fill: #f0f0f0; font-weight: 500; }
.mid { text-anchor: middle; }
.float { position: absolute; left: 503px; top: 5px; width: 478px; height: 33px; background: #1d1d1d; border-radius: 5px; display: flex; align-items: center; box-shadow: 0 2px 4px #0006; color: #bcbcbc; }
.grip { margin: 0 6px; }
.float button { flex: 1; height: 32px; }
.ranges { height: 33px; display: flex; align-items: center; gap: 8px; padding-left: 11px; font-family: Lato, sans-serif; font-size: 12px; font-weight: 500; color: #c4c4c4; }
.ranges i { width: 1px; height: 20px; background: #3c3c3c; }
.goto { margin-left: 2px; }
.clock { margin-left: auto; }
.adj { background: #3a3a3a; border-radius: 4px; height: 29px; width: 39px; margin-left: -4px; }
.exp { margin-right: 9px; }
.side { width: 39px; border-left: 3px solid #2b2b2b; display: flex; flex-direction: column; align-items: center; padding-top: 1px; box-sizing: content-box; flex-shrink: 0; }
.side button { width: 39px; height: 39px; }
.space { height: 32px; }
.side hr { width: 28px; margin: 5px 0; }
.alerts { position: relative; }
.side .badge { left: 18px; top: 3px; }

.zoombar { height: 76px; display: flex; justify-content: space-between; padding: 0 4px 0 6px; font-size: 11px; }
.zl, .zc { display: flex; }
.zl { width: 190px; }
.zc i { width: 1px; height: 22px; margin: 18px 12px; background: #333; }
.call { position: relative; width: 84px; display: flex; justify-content: center; }
.zl .call { width: 88px; }
.call.wide { width: 114px; }
.call > button { flex-direction: column; justify-content: flex-start; padding-top: 10px; gap: 3px; line-height: 16px; }
.call .up { position: absolute; top: 3px; }
.near { left: calc(50% + 18px); }
.far { left: calc(50% + 24px); }
.up.wide { left: calc(50% + 40px); }
.count { position: absolute; left: calc(50% + 15px); top: 13px; color: #ccc; }
</style>
